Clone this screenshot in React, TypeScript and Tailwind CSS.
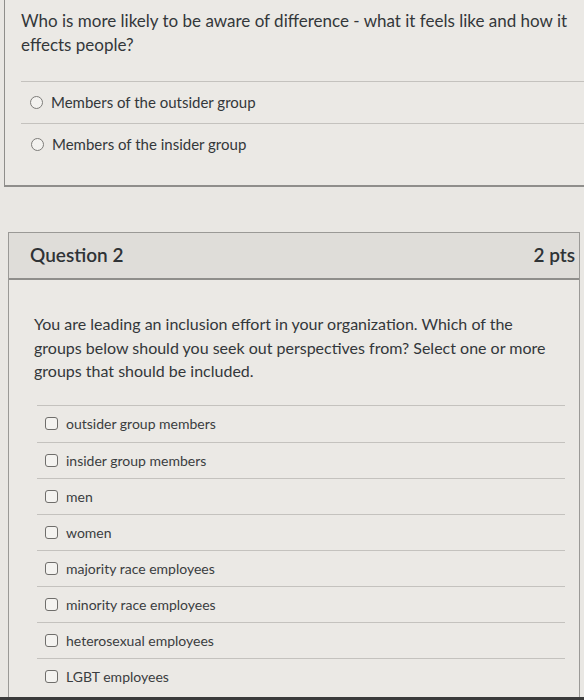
import React from "react";

const options = [
  "outsider group members",
  "insider group members",
  "men",
  "women",
  "majority race employees",
  "minority race employees",
  "heterosexual employees",
  "LGBT employees",
];

export default function App() {
  return (
    <div
      className="w-[584px] h-[700px] overflow-hidden bg-[#e9e7e3] text-[#33373a] relative"
      style={{ fontFamily: "Lato, 'Noto Sans', sans-serif" }}
    >
      {/* Question 1 panel (continuation) */}
      <div className="ml-[4px] w-[600px] h-[187px] border-l border-b-2 border-[#8f8e8b] bg-[#ebe9e5]">
        <div className="pl-[16px] pt-[9px] text-[17px] leading-[24px] w-[575px]">
          Who is more likely to be aware of difference - what it feels like and how it effects people?
        </div>
        <div className="ml-[16px] mt-[24px] border-t border-[#c4c2be]">
          <div className="h-[41px] flex items-center pl-[9px] gap-[8px] text-[15px]">
            <span className="w-[13px] h-[13px] rounded-full border border-[#7d7c79] bg-[#f3f2ef]" />
            <span>Members of the outsider group</span>
          </div>
          <div className="border-t border-[#c4c2be] h-[41px] flex items-center pl-[10px] gap-[8px] text-[15px]">
            <span className="w-[13px] h-[13px] rounded-full border border-[#7d7c79] bg-[#f3f2ef]" />
            <span>Members of the insider group</span>
          </div>
        </div>
      </div>

      {/* Question 2 panel */}
      <div className="mt-[45px] ml-[8px] w-[572px] border border-[#9a9996] border-b-0 bg-[#ebe9e5] h-[500px]">
        <div className="h-[47px] bg-[#dfddd9] border-b-2 border-[#8f8e8b] flex items-center justify-between pl-[21px] pr-[4px]">
          <span className="text-[19px] font-semibold text-[#2f3336]">Question 2</span>
          <span className="text-[19px] font-semibold text-[#2f3336]">2 pts</span>
        </div>
        <div className="pl-[25px] pt-[32px] text-[16px] leading-[23.5px] w-[552px]">
          You are leading an inclusion effort in your organization. Which of the groups below should you seek out perspectives from? Select one or more groups that should be included.
        </div>
        <div className="ml-[28px] mr-[14px] mt-[22px] border-t border-[#c4c2be]">
          {options.map((o, i) => (
            <div
              key={o}
              className={
                "h-[36px] flex items-center pl-[8px] gap-[8px] text-[14px] text-[#3a3d40] " +
                (i > 0 ? "border-t border-[#c4c2be]" : "")
              }
            >
              <span className="w-[13px] h-[13px] rounded-[3px] border border-[#6f6e6b] bg-[#f4f3f0]" />
              <span>{o}</span>
            </div>
          ))}
        </div>
      </div>
      <div className="absolute left-0 bottom-0 w-full h-[3px] bg-[#3b3b3b]" />
    </div>
  );
}
